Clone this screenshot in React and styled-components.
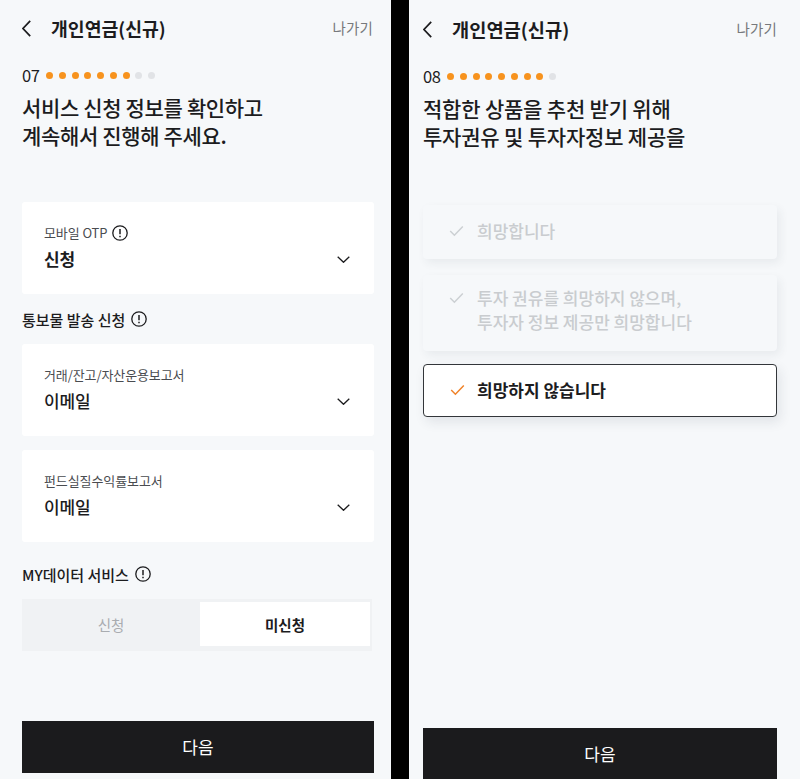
import React from "react";
import styled, { createGlobalStyle } from "styled-components";

const GlobalStyle = createGlobalStyle`
  html, body {
    margin: 0;
    padding: 0;
    background: #000;
  }
  body {
    font-family: "Noto Sans CJK KR", "Noto Sans", sans-serif;
    color: #1c1c1e;
  }
  * { box-sizing: border-box; }
`;

const Stage = styled.div`
  display: grid;
  grid-template-columns: 391px 391px;
  column-gap: 18px;
  width: 800px;
  height: 779px;
  overflow: hidden;
  background: #000;
`;

const Screen = styled.section`
  display: flex;
  flex-direction: column;
  height: 779px;
  background: #f6f8fa;
  padding: ${(p) => (p.$second ? "1px 23px 0 14px" : "0 17px 6px 22px")};
`;

const Header = styled.header`
  display: flex;
  align-items: center;
  justify-content: space-between;
  height: 56px;
  flex-shrink: 0;
`;

const HeaderLeft = styled.div`
  display: flex;
  align-items: center;
  gap: 20px;
`;

const BackIcon = styled.svg`
  width: 9px;
  height: 17px;
  fill: none;
  stroke: #1c1c1e;
  stroke-width: 1.7;
`;

const Title = styled.h1`
  margin: -1px 0 0;
  font-size: ${(p) => (p.$second ? 18.7 : 18.3)}px;
  line-height: 24px;
  font-weight: 700;
`;

const ExitLink = styled.a`
  margin: -2px ${(p) => (p.$second ? 0 : 1)}px 0 0;
  font-size: 14.5px;
  color: #77797c;
  letter-spacing: 0.2px;
`;

const StepRow = styled.div`
  display: flex;
  align-items: center;
  margin-top: 9px;
  height: 20px;
`;

const StepNumber = styled.span`
  font-size: 16.5px;
  line-height: 20px;
  width: 24px;
  letter-spacing: -0.3px;
`;

const Dots = styled.div`
  display: flex;
  gap: 5.75px;
`;

const Dot = styled.i`
  display: block;
  width: 7px;
  height: 7px;
  border-radius: 50%;
  background: ${(p) => (p.$on ? "#f7931e" : "#e1e3e6")};
`;

const Heading = styled.h2`
  margin: 8px 0 0;
  font-size: 21px;
  line-height: 28px;
  font-weight: 500;
  letter-spacing: ${(p) => (p.$second ? -0.2 : -0.35)}px;
  white-space: pre-line;
`;

const SelectCard = styled.div`
  display: flex;
  align-items: flex-end;
  justify-content: space-between;
  height: 92px;
  margin-top: ${(p) => p.$top || 0}px;
  padding: 0 22px 23px;
  background: #fff;
  border-radius: 3px;
`;

const FieldLabel = styled.div`
  display: flex;
  align-items: center;
  gap: 5px;
  font-size: 13px;
  line-height: 18px;
  color: #4a4c50;
  letter-spacing: -0.1px;
`;

const FieldValue = styled.div`
  margin-top: 4px;
  font-size: 17px;
  line-height: 25px;
  font-weight: ${(p) => p.$weight || 500};
  letter-spacing: -0.1px;
`;

const Chevron = styled.svg`
  width: 13px;
  height: 7px;
  margin: 0 2.5px 8.5px 0;
  fill: none;
  stroke: #1c1c1e;
  stroke-width: 1.3;
`;

const SectionLabel = styled.div`
  display: flex;
  align-items: center;
  gap: 6px;
  height: 24px;
  margin-top: ${(p) => p.$top}px;
  font-size: 15px;
  font-weight: 500;
`;

const InfoSvg = styled.svg`
  width: 16px;
  height: 16px;
  fill: none;
  stroke: #1c1c1e;
  stroke-width: 1.3;
`;

const Segment = styled.div`
  display: grid;
  grid-template-columns: 178px 170px;
  width: 350px;
  height: 52px;
  margin-top: 13px;
  padding: 3px 2px 5px 0;
  background: #f0f2f4;
`;

const SegmentItem = styled.button`
  border: 0;
  padding: 0;
  font-family: inherit;
  font-size: 14.5px;
  font-weight: ${(p) => (p.$active ? 700 : 400)};
  color: ${(p) => (p.$active ? "#1c1c1e" : "#a9acb0")};
  background: ${(p) => (p.$active ? "#fff" : "transparent")};
`;

const NextButton = styled.button`
  display: block;
  flex-shrink: 0;
  width: 352px;
  height: 52px;
  margin-top: auto;
  border: 0;
  padding: 0 0 2px;
  font-family: inherit;
  font-size: 17px;
  color: #fff;
  background: #1b1b1d;
  ${(p) => p.$second && "width: 354px; margin-bottom: -1px;"}
`;

const Options = styled.div`
  display: flex;
  flex-direction: column;
  margin-top: 55px;
`;

const Option = styled.div`
  display: flex;
  align-items: ${(p) => (p.$tall ? "flex-start" : "center")};
  gap: ${(p) => (p.$active ? 12 : 13)}px;
  height: ${(p) => p.$height}px;
  margin-top: ${(p) => p.$top || 0}px;
  padding: ${(p) => (p.$tall ? "11px 26px 0" : "0 26px 2px")};
  border-radius: 4px;
  border: ${(p) => (p.$active ? "1px solid #33363a" : "0")};
  background: ${(p) => (p.$active ? "#fff" : "#f6f8fa")};
  box-shadow: ${(p) =>
    p.$active ? "3px 5px 12px rgba(40, 50, 70, 0.1)" : "3px 4px 10px rgba(40, 50, 70, 0.07)"};
  font-size: 17px;
  line-height: 24px;
  font-weight: ${(p) => (p.$active ? 700 : 500)};
  color: ${(p) => (p.$active ? "#1c1c1e" : "#c9cccf")};
  white-space: pre-line;
`;

const CheckIcon = styled.svg`
  width: 15px;
  height: 12px;
  flex-shrink: 0;
  fill: none;
  stroke: ${(p) => (p.$active ? "#f0832a" : "#ccd0d3")};
  stroke-width: 1.5;
  ${(p) => p.$tall && "margin-top: 6px;"}
`;

const Back = () => (
  <BackIcon viewBox="0 0 9 17">
    <path d="M8.2 0.8 L1 8.5 L8.2 16.2" />
  </BackIcon>
);

const Info = () => (
  <InfoSvg viewBox="0 0 16 16">
    <circle cx="8" cy="8" r="7.2" />
    <path d="M8 3.9 V9.2" strokeWidth="1.5" />
    <path d="M8 10.7 V12.2" strokeWidth="1.5" />
  </InfoSvg>
);

const Down = () => (
  <Chevron viewBox="0 0 13 7">
    <path d="M0.7 0.7 L6.5 6.3 L12.3 0.7" />
  </Chevron>
);

const Check = ({ active, tall }) => (
  <CheckIcon viewBox="0 0 15 12" $active={active} $tall={tall}>
    <path d="M1.2 6 L5.4 10.2 L13.8 1.4" />
  </CheckIcon>
);

const Top = ({ step, total, second }) => (
  <>
    <Header>
      <HeaderLeft>
        <Back />
        <Title $second={second}>개인연금(신규)</Title>
      </HeaderLeft>
      <ExitLink $second={second}>나가기</ExitLink>
    </Header>
    <StepRow>
      <StepNumber>{String(step).padStart(2, "0")}</StepNumber>
      <Dots>
        {Array.from({ length: total }, (_, i) => (
          <Dot key={i} $on={i < step} />
        ))}
      </Dots>
    </StepRow>
  </>
);

const Field = ({ top, label, value, weight, info }) => (
  <SelectCard $top={top}>
    <div>
      <FieldLabel>
        {label}
        {info && <Info />}
      </FieldLabel>
      <FieldValue $weight={weight}>{value}</FieldValue>
    </div>
    <Down />
  </SelectCard>
);

export default function App() {
  return (
    <Stage>
      <GlobalStyle />
      <Screen>
        <Top step={7} total={9} />
        <Heading>{"서비스 신청 정보를 확인하고\n계속해서 진행해 주세요."}</Heading>
        <Field top={53} label="모바일 OTP" value="신청" weight={700} info />
        <SectionLabel $top={13}>
          통보물 발송 신청 <Info />
        </SectionLabel>
        <Field top={13} label="거래/잔고/자산운용보고서" value="이메일" />
        <Field top={14} label="펀드실질수익률보고서" value="이메일" />
        <SectionLabel $top={20}>
          MY데이터 서비스 <Info />
        </SectionLabel>
        <Segment>
          <SegmentItem>신청</SegmentItem>
          <SegmentItem $active>미신청</SegmentItem>
        </Segment>
        <NextButton>다음</NextButton>
      </Screen>
      <Screen $second>
        <Top step={8} total={9} second />
        <Heading $second>{"적합한 상품을 추천 받기 위해\n투자권유 및 투자자정보 제공을"}</Heading>
        <Options>
          <Option $height={54}>
            <Check />
            희망합니다
          </Option>
          <Option $height={76} $top={16} $tall>
            <Check tall />
            {"투자 권유를 희망하지 않으며,\n투자자 정보 제공만 희망합니다"}
          </Option>
          <Option $height={53} $top={13} $active>
            <Check active />
            희망하지 않습니다
          </Option>
        </Options>
        <NextButton $second>다음</NextButton>
      </Screen>
    </Stage>
  );
}
